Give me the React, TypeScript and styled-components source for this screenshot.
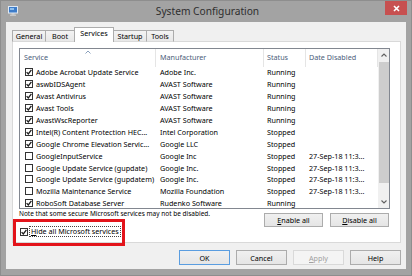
import React from 'react';
import styled, { createGlobalStyle } from 'styled-components';

const GlobalStyle = createGlobalStyle`
  html, body {
    margin: 0;
    padding: 0;
    background: #a3a3a3;
  }
  body {
    width: 412px;
    height: 276px;
    overflow: hidden;
    font-family: "Segoe UI", "Noto Sans", sans-serif;
    font-size: 7.2px;
    color: #000;
  }
`;

const Window = styled.div`
  width: 412px;
  height: 276px;
  box-sizing: border-box;
  background: #a3a3a3;
  box-shadow: inset 0 0 0 1px #8e8e8e;
  display: flex;
  flex-direction: column;
`;

const TitleBar = styled.div`
  height: 22px;
  flex: none;
  display: grid;
  grid-template-columns: 1fr auto 1fr;
  align-items: center;
  padding: 0 5px 0 8px;
`;

const AppIcon = styled.svg`
  align-self: start;
  margin-top: 6px;
`;

const Title = styled.div`
  font-size: 10.2px;
  color: #2e2e2e;
`;

const CloseButton = styled.div`
  justify-self: end;
  align-self: start;
  margin-top: 1px;
  width: 22px;
  height: 14px;
  background: #c75050;
  display: flex;
  align-items: center;
  justify-content: center;
`;

const Client = styled.div`
  flex: 1;
  margin: 0 6px 7px 6px;
  background: #f0f0f0;
  padding: 5px 5px 4px 6px;
  display: flex;
  flex-direction: column;
  min-height: 0;
`;

const TabStrip = styled.div`
  height: 15px;
  margin-bottom: -1px;
  display: flex;
  align-items: flex-end;
  position: relative;
  z-index: 1;
  flex: none;
`;

const Tab = styled.div<{ $w: number; $active?: boolean }>`
  width: ${(p) => p.$w}px;
  height: ${(p) => (p.$active ? 15 : 12)}px;
  box-sizing: border-box;
  margin-left: -1px;
  &:first-child {
    margin-left: 0;
  }
  border: 1px solid #acacac;
  border-bottom: ${(p) => (p.$active ? 'none' : '1px solid #d9d9d9')};
  background: ${(p) => (p.$active ? '#fff' : 'linear-gradient(#f3f3f3, #e8e8e8)')};
  position: relative;
  z-index: ${(p) => (p.$active ? 2 : 1)};
  text-align: center;
  line-height: 9px;
  padding-top: 1px;
  color: #000;
`;

const Panel = styled.div`
  flex: 1;
  background: #fff;
  border: 1px solid #d9d9d9;
  padding: 6px 10px 0 6px;
  display: flex;
  flex-direction: column;
  min-height: 0;
`;

const ListBox = styled.div`
  height: 161px;
  box-sizing: border-box;
  border: 1px solid #828790;
  display: flex;
  background: #fff;
  overflow: hidden;
  flex: none;
`;

const Table = styled.div`
  flex: 1;
  display: flex;
  flex-direction: column;
  overflow: hidden;
`;

const COLS = '136px 108px 42px 72px';

const HeaderRow = styled.div`
  display: grid;
  grid-template-columns: ${COLS};
  height: 17.5px;
  flex: none;
`;

const HeaderCell = styled.div<{ $pad: number }>`
  position: relative;
  border-right: 1px solid #e5e5e5;
  padding-left: ${(p) => p.$pad}px;
  padding-bottom: 1.5px;
  display: flex;
  align-items: center;
  color: #4c607a;
  white-space: nowrap;
`;

const SortArrow = styled.svg`
  position: absolute;
  top: 1px;
  left: 50%;
  margin-left: -3px;
`;

const Row = styled.div`
  display: grid;
  grid-template-columns: ${COLS};
  height: 11.9px;
  flex: none;
  align-items: center;
`;

const Cell = styled.div<{ $pad: number }>`
  padding-left: ${(p) => p.$pad}px;
  white-space: nowrap;
  overflow: hidden;
  display: flex;
  align-items: center;
  gap: 3px;
`;

const Box = styled.span`
  width: 8px;
  height: 8px;
  box-sizing: border-box;
  border: 1px solid #333;
  background: #fff;
  flex: none;
  display: flex;
  align-items: center;
  justify-content: center;
`;

const ScrollBar = styled.div`
  width: 11px;
  flex: none;
  background: #f0f0f0;
  display: flex;
  flex-direction: column;
  align-items: center;
`;

const ScrollArrow = styled.div`
  height: 12px;
  width: 100%;
  display: flex;
  align-items: center;
  justify-content: center;
  flex: none;
`;

const Thumb = styled.div`
  margin-top: 1px;
  width: 10px;
  height: 121px;
  background: #cdcdcd;
  flex: none;
`;

const Track = styled.div`
  flex: 1;
`;

const BottomArea = styled.div`
  display: flex;
  justify-content: space-between;
  align-items: flex-start;
`;

const NoteColumn = styled.div`
  display: flex;
  flex-direction: column;
`;

const Note = styled.div`
  line-height: 10px;
  font-size: 6.5px;
  white-space: nowrap;
`;

const HideRow = styled.div`
  position: relative;
  margin-top: 7px;
  height: 11px;
  padding-left: 1px;
  display: flex;
  align-items: center;
  gap: 1px;
`;

const FocusText = styled.span`
  border: 1px dotted #444;
  padding: 0 1px;
  line-height: 9px;
  white-space: nowrap;
`;

const Highlight = styled.div`
  position: absolute;
  left: -6px;
  top: -7px;
  width: 112px;
  height: 27px;
  box-sizing: border-box;
  border: 3px solid #e3141b;
`;

const ButtonGroup = styled.div<{ $gap: number }>`
  display: flex;
  gap: ${(p) => p.$gap}px;
`;

const PanelButtons = styled(ButtonGroup)`
  margin-top: 4px;
  margin-right: 1px;
`;

const Button = styled.div<{ $w: number; $default?: boolean; $disabled?: boolean }>`
  width: ${(p) => p.$w}px;
  height: ${(p) => (p.$w > 52 ? 14 : 15)}px;
  box-sizing: border-box;
  border: 1px solid ${(p) => (p.$default ? '#5a9de0' : p.$disabled ? '#d9d9d9' : '#acacac')};
  background: ${(p) => (p.$disabled ? '#f4f4f4' : 'linear-gradient(#f0f0f0, #e5e5e5)')};
  color: ${(p) => (p.$disabled ? '#a0a0a0' : '#000')};
  display: flex;
  align-items: center;
  justify-content: center;
  white-space: nowrap;
`;

const Footer = styled(ButtonGroup)`
  margin-top: 7px;
  justify-content: flex-end;
  flex: none;
`;

const Key = styled.span`
  text-decoration: underline;
`;

type Service = { name: string; maker: string; status: string; date: string; on: boolean };

const services: Service[] = [
  { name: 'Adobe Acrobat Update Service', maker: 'Adobe Inc.', status: 'Running', date: '', on: true },
  { name: 'aswbIDSAgent', maker: 'AVAST Software', status: 'Running', date: '', on: true },
  { name: 'Avast Antivirus', maker: 'AVAST Software', status: 'Running', date: '', on: true },
  { name: 'Avast Tools', maker: 'AVAST Software', status: 'Running', date: '', on: true },
  { name: 'AvastWscReporter', maker: 'AVAST Software', status: 'Running', date: '', on: true },
  { name: 'Intel(R) Content Protection HEC...', maker: 'Intel Corporation', status: 'Stopped', date: '', on: true },
  { name: 'Google Chrome Elevation Servic...', maker: 'Google LLC', status: 'Stopped', date: '', on: true },
  { name: 'GoogleInputService', maker: 'Google Inc', status: 'Stopped', date: '27-Sep-18 11:3...', on: false },
  { name: 'Google Update Service (gupdate)', maker: 'Google Inc.', status: 'Stopped', date: '27-Sep-18 11:3...', on: false },
  { name: 'Google Update Service (gupdatem)', maker: 'Google Inc.', status: 'Stopped', date: '27-Sep-18 11:3...', on: false },
  { name: 'Mozilla Maintenance Service', maker: 'Mozilla Foundation', status: 'Stopped', date: '27-Sep-18 11:3...', on: false },
  { name: 'RoboSoft Database Server', maker: 'Rudenko Software', status: 'Running', date: '', on: true },
];

const tabs = [
  { label: 'General', w: 34 },
  { label: 'Boot', w: 30 },
  { label: 'Services', w: 40, active: true },
  { label: 'Startup', w: 34 },
  { label: 'Tools', w: 28 },
];

function CheckBox({ on }: { on: boolean }) {
  return (
    <Box>
      {on && (
        <svg width="6" height="6" viewBox="0 0 6 6">
          <path d="M0.6 3.1 L2.3 4.9 L5.4 0.9" fill="none" stroke="#1e1e1e" strokeWidth="1.3" />
        </svg>
      )}
    </Box>
  );
}

function Chevron({ up }: { up?: boolean }) {
  return (
    <svg width="6" height="4" viewBox="0 0 6 4">
      <path d={up ? 'M0.5 3.5 L3 1 L5.5 3.5' : 'M0.5 0.5 L3 3 L5.5 0.5'} fill="none" stroke="#606060" strokeWidth="1.1" />
    </svg>
  );
}

function App() {
  return (
    <Window>
      <GlobalStyle />
      <TitleBar>
        <AppIcon width="10" height="10" viewBox="0 0 10 10">
          <rect x="0.5" y="0.5" width="9" height="6.5" fill="#3d7cc9" stroke="#dfe9f5" />
          <rect x="2" y="2" width="4" height="2" fill="#8fc0ee" />
          <rect x="3.5" y="7.5" width="3" height="1" fill="#e6e6e6" />
          <rect x="2" y="8.6" width="6" height="1.2" fill="#d0d0d0" />
        </AppIcon>
        <Title>System Configuration</Title>
        <CloseButton>
          <svg width="7" height="7" viewBox="0 0 7 7">
            <path d="M1 1 L6 6 M6 1 L1 6" stroke="#fff" strokeWidth="1.6" />
          </svg>
        </CloseButton>
      </TitleBar>

      <Client>
        <TabStrip>
          {tabs.map((t) => (
            <Tab key={t.label} $w={t.w} $active={t.active}>
              {t.label}
            </Tab>
          ))}
        </TabStrip>

        <Panel>
          <ListBox>
            <Table>
              <HeaderRow>
                <HeaderCell $pad={4}>
                  <SortArrow width="6" height="4" viewBox="0 0 6 4">
                    <path d="M0.5 3.5 L3 1 L5.5 3.5" fill="none" stroke="#8aa0bc" strokeWidth="1" />
                  </SortArrow>
                  Service
                </HeaderCell>
                <HeaderCell $pad={4}>Manufacturer</HeaderCell>
                <HeaderCell $pad={3}>Status</HeaderCell>
                <HeaderCell $pad={3}>Date Disabled</HeaderCell>
              </HeaderRow>
              {services.map((s) => (
                <Row key={s.name}>
                  <Cell $pad={5}>
                    <CheckBox on={s.on} />
                    {s.name}
                  </Cell>
                  <Cell $pad={4}>{s.maker}</Cell>
                  <Cell $pad={3}>{s.status}</Cell>
                  <Cell $pad={3}>{s.date}</Cell>
                </Row>
              ))}
            </Table>
            <ScrollBar>
              <ScrollArrow>
                <Chevron up />
              </ScrollArrow>
              <Thumb />
              <Track />
              <ScrollArrow>
                <Chevron />
              </ScrollArrow>
            </ScrollBar>
          </ListBox>

          <BottomArea>
            <NoteColumn>
              <Note>Note that some secure Microsoft services may not be disabled.</Note>
              <HideRow>
                <CheckBox on />
                <FocusText>
                  <Key>H</Key>ide all Microsoft services
                </FocusText>
                <Highlight />
              </HideRow>
            </NoteColumn>
            <PanelButtons $gap={7}>
              <Button $w={59}>
                <Key>E</Key>nable all
              </Button>
              <Button $w={59}>
                <Key>D</Key>isable all
              </Button>
            </PanelButtons>
          </BottomArea>
        </Panel>

        <Footer $gap={6}>
          <Button $w={51} $default>
            OK
          </Button>
          <Button $w={51}>Cancel</Button>
          <Button $w={51} $disabled>
            <Key>A</Key>pply
          </Button>
          <Button $w={51}>Help</Button>
        </Footer>
      </Client>
    </Window>
  );
}

export default App;
